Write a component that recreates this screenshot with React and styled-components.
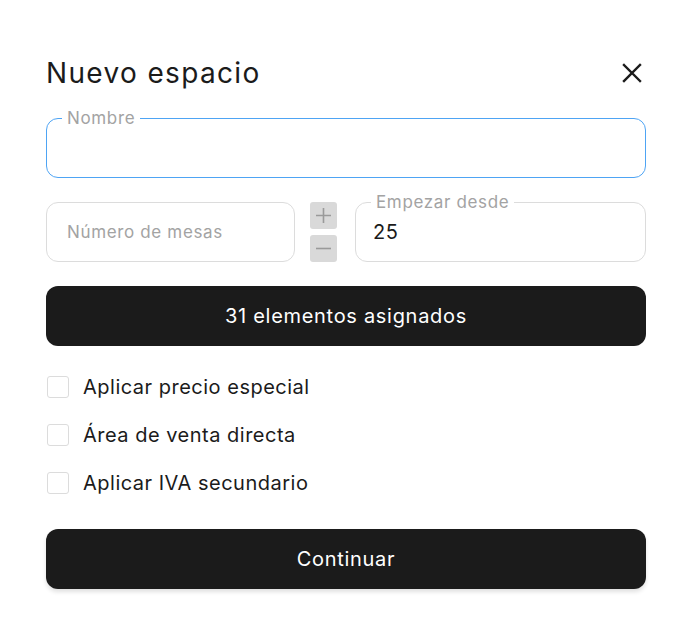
import React, { useState } from 'react';
import styled, { createGlobalStyle } from 'styled-components';

const GlobalStyle = createGlobalStyle`
  body {
    margin: 0;
    background: #ffffff;
    font-family: Inter, "Noto Sans", sans-serif;
    color: #1b1b1b;
  }
`;

const Modal = styled.div`
  width: 600px;
  padding: 53px 43px 40px 46px;
  display: flex;
  flex-direction: column;
`;

const Header = styled.div`
  display: flex;
  align-items: center;
  justify-content: space-between;
  height: 40px;
  margin-bottom: 25px;
`;

const Title = styled.h2`
  margin: 0;
  font-size: 28px;
  font-weight: 400;
  letter-spacing: 1.35px;
  line-height: 40px;
  color: #1b1b1b;
`;

const CloseButton = styled.button`
  background: none;
  border: none;
  padding: 0;
  width: 30px;
  height: 30px;
  margin-right: -1px;
  display: flex;
  align-items: center;
  justify-content: center;
  cursor: pointer;
  color: #1b1b1b;
`;

const Field = styled.div`
  position: relative;
  flex: ${props => props.grow ? '1' : 'none'};
  width: ${props => props.width ? `${props.width}px` : 'auto'};
  height: 60px;
  box-sizing: border-box;
  border: 1px solid ${props => props.focused ? '#4ea4f4' : '#dcdcdc'};
  border-radius: 12px;
  display: flex;
  align-items: center;
  padding: 0 20px;
`;

const Legend = styled.span`
  position: absolute;
  top: -11px;
  left: 15px;
  padding: 0 5px;
  background: #ffffff;
  font-size: 17px;
  letter-spacing: 0.65px;
  line-height: 20px;
  color: #a3a3a3;
`;

const Input = styled.input`
  border: none;
  outline: none;
  background: transparent;
  width: 100%;
  font-family: inherit;
  font-size: ${props => props.large ? '20px' : '17px'};
  letter-spacing: 0.65px;
  color: #1b1b1b;
  padding: 0;
  margin-left: ${props => props.shift || 0}px;

  &::placeholder {
    color: #a3a3a3;
  }
`;

const Row = styled.div`
  display: flex;
  align-items: center;
  margin-top: 24px;
`;

const Stepper = styled.div`
  display: flex;
  flex-direction: column;
  gap: 6px;
  margin: 0 18px 0 15px;
`;

const StepButton = styled.button`
  width: 27px;
  height: 27px;
  border: none;
  border-radius: 3px;
  background: #d9d9d9;
  color: #9a9a9a;
  padding: 0;
  display: flex;
  align-items: center;
  justify-content: center;
  cursor: pointer;
`;

const DarkButton = styled.button`
  height: 60px;
  width: 100%;
  border: none;
  border-radius: 12px;
  background: #1b1b1b;
  color: #ffffff;
  font-family: inherit;
  font-size: 20px;
  font-weight: 400;
  letter-spacing: 0.7px;
  margin-top: ${props => props.top}px;
  box-shadow: ${props => props.shadow ? '0 3px 4px rgba(0, 0, 0, 0.12)' : 'none'};
  cursor: pointer;
`;

const CheckList = styled.div`
  display: flex;
  flex-direction: column;
  margin-top: 17px;
`;

const CheckRow = styled.label`
  display: flex;
  align-items: center;
  gap: 14px;
  height: 48px;
  font-size: 20px;
  letter-spacing: 0.5px;
  color: #1b1b1b;
  cursor: pointer;
  padding-left: 1px;
`;

const Box = styled.span`
  width: 22px;
  height: 22px;
  box-sizing: border-box;
  border: 1px solid #dcdcdc;
  border-radius: 3px;
  background: ${props => props.checked ? '#1b1b1b' : '#ffffff'};
`;

const options = ['Aplicar precio especial', 'Área de venta directa', 'Aplicar IVA secundario'];

export default function App() {
  const [checked, setChecked] = useState([false, false, false]);
  const [start, setStart] = useState('25');

  const toggle = (i) => {
    setChecked(checked.map((c, j) => (j === i ? !c : c)));
  };

  return (
    <>
      <GlobalStyle />
      <Modal>
        <Header>
          <Title>Nuevo espacio</Title>
          <CloseButton aria-label="Cerrar">
            <svg width="22" height="22" viewBox="0 0 22 22" fill="none" stroke="currentColor" strokeWidth="2.4" strokeLinecap="square">
              <path d="M3 3 L19 19 M19 3 L3 19" />
            </svg>
          </CloseButton>
        </Header>

        <Field focused>
          <Legend>Nombre</Legend>
          <Input />
        </Field>

        <Row>
          <Field width={249}>
            <Input placeholder="Número de mesas" />
          </Field>
          <Stepper>
            <StepButton aria-label="Sumar">
              <svg width="17" height="17" viewBox="0 0 17 17" stroke="currentColor" strokeWidth="1.6">
                <path d="M8.5 1 V16 M1 8.5 H16" />
              </svg>
            </StepButton>
            <StepButton aria-label="Restar">
              <svg width="17" height="17" viewBox="0 0 17 17" stroke="currentColor" strokeWidth="1.6">
                <path d="M1 8.5 H16" />
              </svg>
            </StepButton>
          </Stepper>
          <Field grow>
            <Legend>Empezar desde</Legend>
            <Input large shift={-3} value={start} onChange={e => setStart(e.target.value)} />
          </Field>
        </Row>

        <DarkButton top={24}>31 elementos asignados</DarkButton>

        <CheckList>
          {options.map((label, i) => (
            <CheckRow key={label} onClick={() => toggle(i)}>
              <Box checked={checked[i]} />
              {label}
            </CheckRow>
          ))}
        </CheckList>

        <DarkButton top={22} shadow>Continuar</DarkButton>
      </Modal>
    </>
  );
}
